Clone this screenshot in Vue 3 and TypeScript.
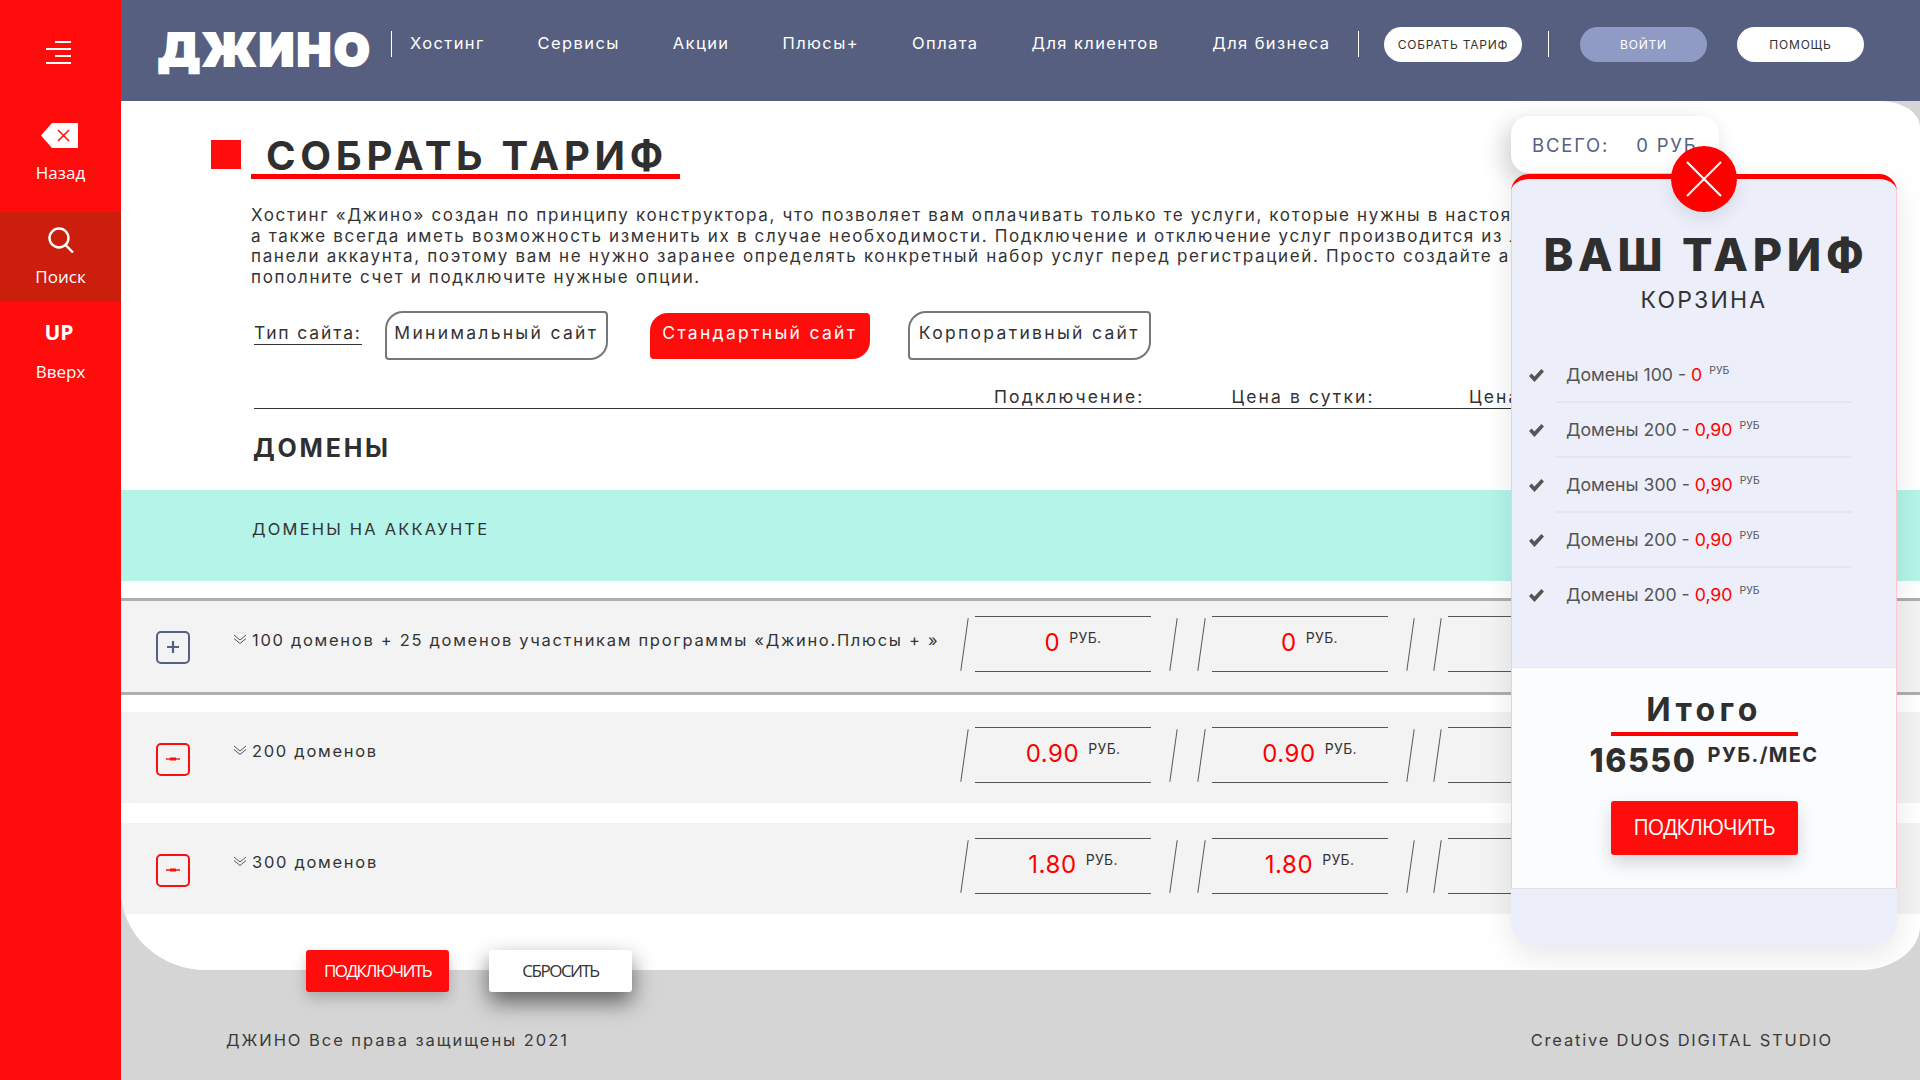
<script setup lang="ts">
interface PriceRow {
  name: string;
  price: string;
  added: boolean;
}

const navItems = ["Хостинг", "Сервисы", "Акции", "Плюсы+", "Оплата", "Для клиентов", "Для бизнеса"];

const siteTypes = [
  { label: "Минимальный сайт", active: false },
  { label: "Стандартный сайт", active: true },
  { label: "Корпоративный сайт", active: false },
];

const columns = ["Подключение:", "Цена в сутки:", "Цена в месяц:"];

const rows: PriceRow[] = [
  { name: "100 доменов + 25 доменов участникам программы «Джино.Плюсы + »", price: "0", added: false },
  { name: "200 доменов", price: "0.90", added: true },
  { name: "300 доменов", price: "1.80", added: true },
];

const cartItems = [
  { name: "Домены 100", price: "0" },
  { name: "Домены 200", price: "0,90" },
  { name: "Домены 300", price: "0,90" },
  { name: "Домены 200", price: "0,90" },
  { name: "Домены 200", price: "0,90" },
];
</script>

<template>
  <div class="page">
    <aside class="side">
      <svg class="side__burger" width="25" height="24" viewBox="0 0 25 24" fill="#fff">
        <rect x="9" y="0" width="16" height="2" />
        <rect x="0" y="7" width="25" height="2" />
        <rect x="9" y="14" width="16" height="2" />
        <rect x="0" y="21" width="25" height="2" />
      </svg>
      <div class="side__item side__item--back">
        <svg width="37" height="25" viewBox="0 0 37 25">
          <path d="M11 0H37V25H11L0 12.5Z" fill="#fff" />
          <path d="M17 7L28 18M28 7L17 18" stroke="#ff0c0c" stroke-width="1.5" fill="none" />
        </svg>
        <span>Назад</span>
      </div>
      <div class="side__item side__item--search">
        <svg width="26" height="26" viewBox="0 0 26 26" fill="none" stroke="#fff" stroke-width="2.4">
          <circle cx="11" cy="11" r="9.5" />
          <path d="M17.5 18L25 25.5" />
        </svg>
        <span>Поиск</span>
      </div>
      <div class="side__item side__item--up">
        <strong>UP</strong>
        <span>Вверх</span>
      </div>
    </aside>

    <div class="main">
      <header class="top">
        <div class="logo">ДЖИНО</div>
        <i class="top__sep"></i>
        <nav class="nav">
          <a v-for="item in navItems" :key="item">{{ item }}</a>
        </nav>
        <i class="top__sep top__sep--a"></i>
        <button class="pill pill--build">СОБРАТЬ ТАРИФ</button>
        <i class="top__sep top__sep--b"></i>
        <button class="pill pill--login">ВОЙТИ</button>
        <button class="pill pill--help">ПОМОЩЬ</button>
      </header>

      <section class="panel">
        <div class="heading">
          <i class="heading__mark"></i>
          <h1>СОБРАТЬ ТАРИФ</h1>
        </div>

        <div class="body">
          <p class="intro">
            Хостинг «Джино» создан по принципу конструктора, что позволяет вам оплачивать только те услуги, которые нужны в настоящий момент,<br />
            а также всегда иметь возможность изменить их в случае необходимости. Подключение и отключение услуг производится из личной<br />
            панели аккаунта, поэтому вам не нужно заранее определять конкретный набор услуг перед регистрацией. Просто создайте аккаунт,<br />
            пополните счет и подключите нужные опции.
          </p>

          <div class="types">
            <span class="types__label">Тип сайта:</span>
            <button
              v-for="t in siteTypes"
              :key="t.label"
              class="type"
              :class="{ 'type--on': t.active }"
            >{{ t.label }}</button>
          </div>

          <div class="cols">
            <span v-for="c in columns" :key="c">{{ c }}</span>
          </div>

          <h2 class="group">ДОМЕНЫ</h2>
        </div>

        <div class="band">ДОМЕНЫ НА АККАУНТЕ</div>

        <div class="rows">
          <div v-for="(row, i) in rows" :key="row.name" class="row" :class="{ 'row--first': i === 0 }">
            <span class="toggle" :class="{ 'toggle--on': row.added }">
              <svg width="14" height="14" viewBox="0 0 14 14" fill="none" stroke="currentColor">
                <path v-if="row.added" d="M0 7H14" stroke-width="1.4" />
                <path v-if="row.added" d="M4 7H10" stroke-width="3" />
                <path v-else d="M1 7H13M7 1V13" stroke-width="2.2" />
              </svg>
            </span>
            <div class="row__name">
              <svg width="14" height="11" viewBox="0 0 14 11" fill="none" stroke="#555" stroke-width="1">
                <path d="M1 1L7 6L13 1M1 4.5L7 9.5L13 4.5" />
              </svg>
              <span>{{ row.name }}</span>
            </div>
            <div class="cells">
              <div v-for="n in 3" :key="n" class="cell">
                <template v-if="n < 3"><b>{{ row.price }}</b><sup>РУБ.</sup></template>
              </div>
            </div>
          </div>
        </div>

        <div class="cart-wrap">
          <div class="sum"><span>ВСЕГО:</span><span>0 РУБ</span></div>
          <div class="close">
            <svg width="38" height="38" viewBox="0 0 38 38" stroke="#fff" stroke-width="2" fill="none">
              <path d="M2 2L36 36M36 2L2 36" />
            </svg>
          </div>
          <div class="cart">
            <div class="cart__top">
              <h2>ВАШ ТАРИФ</h2>
              <h3>КОРЗИНА</h3>
              <ul>
                <li v-for="(c, i) in cartItems" :key="i">
                  <svg width="15" height="13" viewBox="0 0 15 13" fill="#555">
                    <path d="M0 7L2.6 4.6L5.4 7.6L12.4 0L15 2.4L5.5 13Z" />
                  </svg>
                  <div class="cart__line">
                    {{ c.name }} - <em>{{ c.price }}</em> <sup>РУБ</sup>
                  </div>
                </li>
              </ul>
            </div>
            <div class="cart__total">
              <div class="cart__label">Итого</div>
              <div class="cart__sum"><b>16550</b><span>РУБ./МЕС</span></div>
              <button class="cta cta--cart">ПОДКЛЮЧИТЬ</button>
            </div>
          </div>
        </div>
      </section>

      <footer class="foot">
        <div class="foot__actions">
          <button class="cta">ПОДКЛЮЧИТЬ</button>
          <button class="cta cta--plain">СБРОСИТЬ</button>
        </div>
        <div class="foot__text">
          <span>ДЖИНО Все права защищены 2021</span>
          <span class="foot__credit">Creative DUOS DIGITAL STUDIO</span>
        </div>
      </footer>
    </div>
  </div>
</template>

<style>
html,
body {
  margin: 0;
  background: #d5d5d5;
  overflow: hidden;
}
</style>

<style scoped>
.page {
  display: flex;
  width: 1920px;
  height: 1080px;
  overflow: hidden;
  background: #d5d5d5;
  font-family: Inter, "Noto Sans", sans-serif;
  color: #333;
}
button {
  font-family: inherit;
  border: 0;
  cursor: pointer;
  padding: 0;
}

/* sidebar */
.side {
  width: 121px;
  flex-shrink: 0;
  background: #ff0c0c;
  color: #fff;
  display: flex;
  flex-direction: column;
  align-items: stretch;
  font-family: "Open Sans", sans-serif;
  font-size: 17px;
}
.side__burger {
  margin: 41px 0 0 46px;
}
.side__item {
  display: flex;
  flex-direction: column;
  align-items: center;
}
.side__item--back {
  margin-top: 58px;
  height: 89px;
  padding-left: 0;
}
.side__item--back svg {
  margin-right: 3px;
}
.side__item--back span {
  margin-top: 13px;
}
.side__item--search {
  height: 90px;
  background: #cc1e0c;
  padding-top: 15px;
  box-sizing: border-box;
}
.side__item--search span {
  margin-top: 12px;
}
.side__item--up {
  padding-top: 16px;
}
.side__item--up strong {
  font-size: 21px;
  line-height: 28px;
  margin-right: 3px;
  font-family: "Open Sans", sans-serif;
}
.side__item--up span {
  margin-top: 14px;
}

.main {
  flex: 1;
  min-width: 0;
  display: flex;
  flex-direction: column;
}

/* top bar */
.top {
  height: 101px;
  flex-shrink: 0;
  background: #565f80;
  display: flex;
  align-items: center;
  padding: 0 0 14px 37px;
  box-sizing: border-box;
  color: #fff;
  position: relative;
  z-index: 2;
}
.logo {
  width: 213px;
  font-family: "Inter", sans-serif;
  font-weight: 900;
  font-size: 46px;
  line-height: 50px;
  letter-spacing: 2.7px;
  -webkit-text-stroke: 2px #fff;
  margin-top: 11px;
  white-space: nowrap;
}
.top__sep {
  width: 1px;
  height: 26px;
  background: #fff;
  margin-left: 20px;
  flex-shrink: 0;
}
.nav {
  display: flex;
  gap: 53px;
  margin: -2px 0 0 18px;
  font-size: 16.5px;
  letter-spacing: 1.4px;
  width: 920px;
  white-space: nowrap;
}
.top__sep--a {
  margin-left: 28px;
}
.top__sep--b {
  margin-left: 26px;
}
.pill {
  height: 35px;
  border-radius: 18px;
  background: #fff;
  color: #333;
  font-size: 12px;
  letter-spacing: 0.8px;
  width: 127px;
  margin-top: 2px;
  flex-shrink: 0;
}
.pill--build {
  width: 138px;
  margin-left: 25px;
}
.pill--login {
  background: #8f9bc4;
  color: #fff;
  margin-left: 31px;
}
.pill--help {
  margin-left: 30px;
}

/* white sheet */
.panel {
  position: relative;
  height: 869px;
  flex-shrink: 0;
  background: #fff;
  border-radius: 0 40px 60px 85px / 0 26px 44px 80px;
  overflow: hidden;
}
.heading {
  display: flex;
  align-items: flex-start;
  padding: 39px 0 0 90px;
}
.heading__mark {
  width: 30px;
  height: 29px;
  background: #ff0c0c;
  flex-shrink: 0;
}
.heading h1 {
  margin: -4px 0 0 10px;
  padding: 0 12px 0 15px;
  height: 38px;
  border-bottom: 5px solid #ff0000;
  font-size: 40px;
  line-height: 40px;
  font-weight: 700;
  letter-spacing: 4.7px;
  color: #2f2f2f;
  white-space: nowrap;
}
.body {
  padding-left: 130px;
}
.intro {
  margin: 26px 0 0;
  font-size: 17px;
  line-height: 20.7px;
  letter-spacing: 1.65px;
  white-space: nowrap;
}
.types {
  display: flex;
  align-items: center;
  height: 49px;
  margin-top: 23px;
  padding-left: 3px;
}
.types__label {
  font-size: 17.5px;
  letter-spacing: 1.85px;
  border-bottom: 1px solid #333;
  line-height: 22px;
  margin: -3px 23px 0 0;
}
.type {
  height: 49px;
  background: #fff;
  border: 2px solid #777;
  border-radius: 18px 4px 18px 4px;
  color: #333;
  font-size: 17.5px;
  letter-spacing: 2.3px;
  width: 223px;
  box-sizing: border-box;
  padding-bottom: 6px;
  white-space: nowrap;
  flex-shrink: 0;
}
.type--on {
  width: 220px;
  height: 46px;
  margin: 1px 38px 0 42px;
  background: #ff0c0c;
  border-color: #ff0c0c;
  color: #fff;
}
.type:last-child {
  width: 243px;
}
.cols {
  display: flex;
  padding: 0 0 1px 740px;
  margin: 27px 0 0 3px;
  width: 700px;
  border-bottom: 1px solid #333;
  font-size: 17.5px;
  line-height: 20px;
  letter-spacing: 2.1px;
  white-space: nowrap;
}
.cols span {
  width: 237.5px;
  flex-shrink: 0;
}
.group {
  margin: 24px 0 0 2px;
  font-size: 25px;
  line-height: 30px;
  font-weight: 700;
  letter-spacing: 2.8px;
  color: #2f2f2f;
}
.band {
  margin-top: 27px;
  height: 91px;
  box-sizing: border-box;
  padding: 28px 0 0 131px;
  background: #b4f4e9;
  font-size: 16.5px;
  line-height: 22px;
  letter-spacing: 2.2px;
}

/* price rows */
.rows {
  margin-top: 17px;
}
.row {
  display: flex;
  height: 91px;
  box-sizing: border-box;
  padding-left: 35px;
  margin-top: 20px;
  background: #f3f3f3;
}
.row--first {
  height: 97px;
  margin-top: 0;
  margin-bottom: -3px;
  border-top: 3px solid #aeaeae;
  border-bottom: 3px solid #aeaeae;
}
.toggle {
  width: 34px;
  height: 33px;
  margin-top: 31px;
  box-sizing: border-box;
  border: 2.5px solid #565f80;
  border-radius: 5px;
  color: #565f80;
  display: flex;
  align-items: center;
  justify-content: center;
  flex-shrink: 0;
}
.row--first .toggle {
  margin-top: 30px;
}
.toggle--on {
  border-color: #ff0c0c;
  color: #ff0c0c;
}
.row__name {
  width: 742px;
  margin: 28px 0 0 43px;
  flex-shrink: 0;
  display: flex;
  align-items: flex-start;
  gap: 5px;
  font-size: 16.5px;
  line-height: 22px;
  letter-spacing: 1.7px;
  white-space: nowrap;
}
.row__name svg {
  margin-top: 5px;
  flex-shrink: 0;
}
.cells {
  display: flex;
  gap: 60.5px;
  margin-top: 15px;
}
.cell {
  position: relative;
  width: 176px;
  height: 56px;
  box-sizing: border-box;
  border-top: 1px solid #555;
  border-bottom: 1px solid #555;
  display: flex;
  align-items: flex-start;
  justify-content: center;
  padding: 10px 0 0 20px;
  flex-shrink: 0;
}
.cell::before,
.cell::after {
  content: "";
  position: absolute;
  top: 1px;
  width: 1px;
  height: 53px;
  background: #555;
  transform: rotate(8deg);
}
.cell::before {
  left: -11px;
}
.cell::after {
  right: -23px;
}
.cell b {
  font-weight: 400;
  font-size: 24px;
  line-height: 32px;
  letter-spacing: 0.6px;
  color: #ff0000;
}
.cell sup {
  font-size: 14px;
  line-height: 16px;
  margin: 3px 0 0 9px;
  letter-spacing: 0.3px;
}

/* floating cart */
.cart-wrap {
  position: absolute;
  left: 1390px;
  top: 15px;
  width: 386px;
}
.sum {
  width: 208px;
  height: 57px;
  box-sizing: border-box;
  background: #fff;
  border-radius: 18px;
  box-shadow: -6px 8px 24px rgba(0, 0, 0, 0.2);
  display: flex;
  align-items: center;
  padding: 0 0 0 21px;
  gap: 27px;
  font-size: 18.5px;
  letter-spacing: 1.8px;
  color: #565f80;
  white-space: nowrap;
  overflow: hidden;
}
.close {
  position: absolute;
  left: 160px;
  top: 30px;
  width: 66px;
  height: 66px;
  border-radius: 50%;
  background: #ff0000;
  display: flex;
  align-items: center;
  justify-content: center;
  z-index: 2;
  box-shadow: 0 6px 18px rgba(0, 0, 0, 0.1);
}
.cart {
  margin-top: 1px;
  height: 771px;
  box-sizing: border-box;
  background: #eceef9;
  border-top: 5px solid #ff0000;
  border-radius: 18px 18px 24px 24px;
  box-shadow: 0 10px 30px rgba(0, 0, 0, 0.1);
  overflow: hidden;
}
.cart__top {
  height: 488px;
  box-sizing: border-box;
  padding-top: 51px;
  text-align: center;
  border-left: 1px solid #ffc6cd;
  border-right: 1px solid #ffc6cd;
}
.cart__top h2 {
  margin: 0;
  padding-left: 4px;
  font-size: 45px;
  line-height: 50px;
  font-weight: 800;
  letter-spacing: 4.8px;
  color: #2f2f2f;
  white-space: nowrap;
}
.cart__top h3 {
  margin: 6px 0 0;
  font-size: 23px;
  line-height: 28px;
  font-weight: 400;
  letter-spacing: 2.2px;
}
.cart__top ul {
  list-style: none;
  margin: 34px 0 0;
  padding: 0;
  text-align: left;
}
.cart__top li {
  display: flex;
  align-items: center;
  padding-left: 17px;
}
.cart__top li svg {
  flex-shrink: 0;
}
.cart__line {
  width: 297px;
  height: 55px;
  box-sizing: border-box;
  margin-left: 11px;
  padding-left: 11px;
  border-bottom: 2px solid #e3e5ef;
  line-height: 53px;
  font-size: 17.7px;
  color: #555;
  white-space: nowrap;
}
.cart__top li:last-child .cart__line {
  border-bottom: 0;
}
.cart__line em {
  font-style: normal;
  color: #ff0000;
}
.cart__line sup {
  font-size: 10.5px;
  line-height: 0;
  margin-left: 2px;
}
.cart__total {
  height: 222px;
  box-sizing: border-box;
  background: #fbfcfe;
  border: 1px solid #ffc6cd;
  border-top-color: #e3e5ef;
  border-bottom-color: #e0e2ea;
  padding-top: 22px;
  display: flex;
  flex-direction: column;
  align-items: center;
}
.cart__label {
  width: 187px;
  text-align: center;
  font-size: 32px;
  line-height: 40px;
  font-weight: 700;
  letter-spacing: 4.4px;
  color: #2f2f2f;
  padding-bottom: 2px;
  border-bottom: 4px solid #ff0000;
}
.cart__sum {
  display: flex;
  align-items: flex-start;
  gap: 11px;
  margin-top: 5px;
  height: 40px;
  color: #2f2f2f;
  white-space: nowrap;
}
.cart__sum b {
  font-size: 32px;
  line-height: 40px;
  font-weight: 800;
  letter-spacing: 1.6px;
}
.cart__sum span {
  font-size: 20px;
  line-height: 28px;
  font-weight: 700;
  letter-spacing: 1.4px;
}
.cta {
  width: 143px;
  height: 42px;
  background: #ff0c0c;
  color: #fff;
  border-radius: 3px;
  font-family: "Open Sans", sans-serif;
  font-size: 17px;
  letter-spacing: -1.5px;
  padding-bottom: 2px;
  box-shadow: 0 6px 14px rgba(0, 0, 0, 0.22);
}
.cta--cart {
  width: 187px;
  height: 54px;
  margin-top: 20px;
  font-size: 21px;
  letter-spacing: -1px;
  box-shadow: 0 8px 18px rgba(0, 0, 0, 0.16);
}
.cta--plain {
  background: #fff;
  color: #333;
  box-shadow: 0 10px 22px rgba(0, 0, 0, 0.55);
}

/* footer */
.foot {
  position: relative;
  flex: 1;
}
.foot__actions {
  display: flex;
  gap: 40px;
  margin: -20px 0 0 185px;
}
.foot__text {
  display: flex;
  justify-content: space-between;
  padding: 37px 87px 0 105px;
  font-size: 16.5px;
  line-height: 22px;
  letter-spacing: 1.95px;
  color: #3a3a3a;
}
.foot__credit {
  letter-spacing: 1.8px;
}
</style>
